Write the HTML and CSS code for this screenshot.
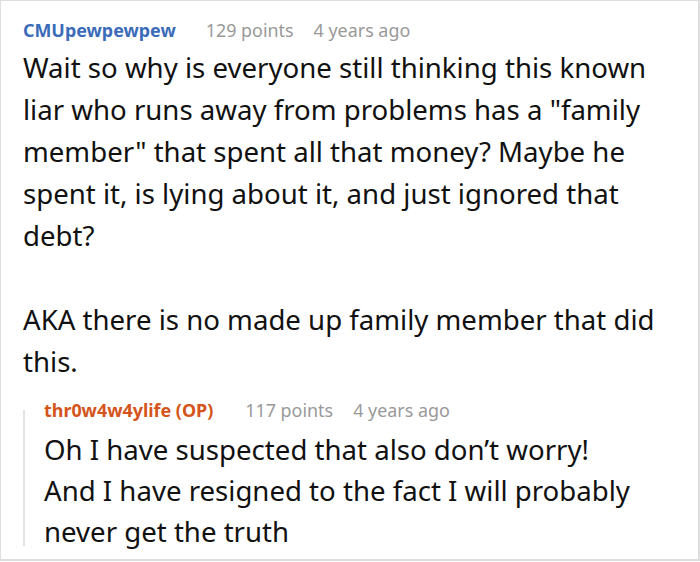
FILE: index.html
```html
<!DOCTYPE html>
<html>
<head>
<meta charset="utf-8">
<link rel="stylesheet" href="styles.css">
</head>
<body>
<div class="frame">
  <div class="comment">
    <div class="meta">
      <span class="user">CMUpewpewpew</span>
      <span class="info">129 points</span>
      <span class="info">4 years ago</span>
    </div>
    <p class="text">Wait so why is everyone still thinking this known liar who runs away from problems has a "family member" that spent all that money? Maybe he spent it, is lying about it, and just ignored that debt?<br><br>AKA there is no made up family member that did this.</p>
    <div class="reply">
      <div class="meta">
        <span class="user op">thr0w4w4ylife (OP)</span>
        <span class="info">117 points</span>
        <span class="info">4 years ago</span>
      </div>
      <p class="text reply-text">Oh I have suspected that also don’t worry!<br>And I have resigned to the fact I will probably never get the truth</p>
    </div>
  </div>
</div>
</body>
</html>
```
FILE: styles.css
```css
html, body {
  margin: 0;
  padding: 0;
  background: #fff;
}
.frame {
  width: 700px;
  height: 561px;
  box-sizing: border-box;
  border: 1px solid #dedede;
  border-right-width: 2px;
  border-bottom-width: 2px;
  overflow: hidden;
  font-family: "Noto Sans", "Open Sans", sans-serif;
}
.comment {
  padding: 17px 0 0 22px;
}
.meta {
  display: flex;
  font-size: 17.9px;
  line-height: 24px;
}
.user {
  color: #3b6cba;
  font-weight: 700;
  margin-right: 30px;
}
.user.op {
  color: #d4541c;
  margin-right: 32px;
}
.info {
  color: #999;
  margin-right: 20px;
}
.text {
  margin: 4px 0 0;
  font-size: 27.6px;
  line-height: 42px;
  color: #111;
  padding-right: 30px;
}
.reply {
  position: relative;
  margin-top: 16px;
  padding-left: 21px;
}
.reply::before {
  content: "";
  position: absolute;
  left: 0;
  top: 12px;
  bottom: 6px;
  width: 2px;
  background: #e3e3e3;
}
.reply-text {
  margin-top: 7px;
  line-height: 41px;
}
```
